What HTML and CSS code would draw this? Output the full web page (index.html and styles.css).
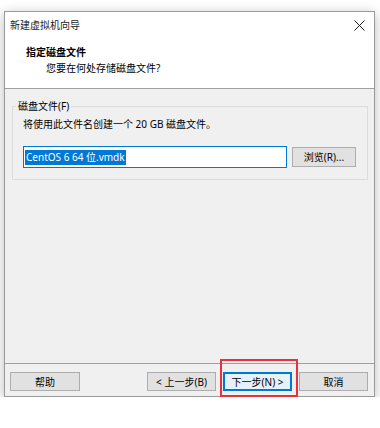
FILE: index.html
```html
<!DOCTYPE html>
<html lang="zh-CN">
<head>
    <meta charset="UTF-8">
    <meta name="viewport" content="width=device-width, initial-scale=1.0">
    <title>新建虚拟机向导</title>
    <link rel="stylesheet" href="styles.css">
</head>
<body>
    <div class="dialog">
        <div class="titlebar">
            <span class="title">新建虚拟机向导</span>
            <svg class="close" width="11" height="11" viewBox="0 0 11 11">
                <path d="M0.5 0.5 L10.5 10.5 M10.5 0.5 L0.5 10.5" stroke="#1a1a1a" stroke-width="1" fill="none"/>
            </svg>
        </div>

        <div class="header">
            <div class="heading">指定磁盘文件</div>
            <div class="subheading">您要在何处存储磁盘文件?</div>
        </div>

        <div class="content">
            <fieldset class="group">
                <legend>磁盘文件(F)</legend>
                <p class="note">将使用此文件名创建一个 20 GB 磁盘文件。</p>
                <div class="file-row">
                    <div class="textbox"><span class="selected">CentOS 6 64 位.vmdk</span></div>
                    <button class="btn btn-browse">浏览(R)...</button>
                </div>
            </fieldset>
        </div>

        <div class="footer">
            <button class="btn btn-help">帮助</button>
            <div class="nav">
                <button class="btn">&lt; 上一步(B)</button>
                <div class="next-wrap">
                    <button class="btn btn-default">下一步(N) &gt;</button>
                    <div class="highlight"></div>
                </div>
                <button class="btn">取消</button>
            </div>
        </div>
    </div>
</body>
</html>
```

FILE: styles.css
```css
* {
    box-sizing: border-box;
    margin: 0;
    padding: 0;
}

body {
    background: #ffffff;
    font-family: "Noto Sans", "Noto Sans CJK SC", sans-serif;
    font-size: 10px;
    line-height: 14px;
    color: #000000;
}

.dialog {
    margin: 11px 0 0 4px;
    width: 371px;
    height: 386px;
    border: 1px solid #9a9a9a;
    background: #f0f0f0;
    display: flex;
    flex-direction: column;
    box-shadow: 0 3px 12px rgba(0, 0, 0, 0.28);
}

.titlebar {
    height: 26px;
    background: #ffffff;
    display: flex;
    align-items: center;
    justify-content: space-between;
    padding: 0 9px 0 5px;
}

.title {
    color: #1a1a1a;
}

.close {
    display: block;
}

.header {
    height: 51px;
    background: #ffffff;
    border-bottom: 1px solid #a0a0a0;
    padding: 7px 0 0 21px;
}

.heading {
    font-weight: bold;
}

.subheading {
    margin-top: 2px;
    padding-left: 20px;
}

.content {
    flex: 1;
}

.group {
    margin: 10px 6px 0 7px;
    padding: 4px 11px 11px 10px;
    border: 1px solid #dcdcdc;
}

.group legend {
    margin-left: -7px;
    padding: 0 2px;
}

.note {
    margin-bottom: 15px;
}

.file-row {
    display: flex;
    align-items: center;
    gap: 5px;
}

.textbox {
    flex: 1;
    height: 22px;
    background: #ffffff;
    border: 1px solid #0078d7;
    padding: 2px 1px;
    display: flex;
    align-items: center;
}

.selected {
    background: #0078d7;
    color: #ffffff;
    line-height: 15px;
    padding: 0 1px;
}

.btn {
    font-family: inherit;
    font-size: 10px;
    line-height: 14px;
    color: #000000;
    height: 19px;
    width: 69px;
    background: #e1e1e1;
    border: 1px solid #adadad;
    cursor: default;
}

.btn-browse {
    width: 64px;
    height: 20px;
}

.btn-help {
    width: 70px;
}

.btn-default {
    border-color: #0078d7;
    box-shadow: inset 0 0 0 1px #0078d7;
    background: #e5f1fb;
}

.footer {
    height: 33px;
    border-top: 1px solid #a0a0a0;
    padding: 8px 6px 0 5px;
    display: flex;
    justify-content: space-between;
    align-items: flex-start;
}

.nav {
    display: flex;
    gap: 7px;
}

.next-wrap {
    position: relative;
}

.highlight {
    position: absolute;
    left: -3px;
    top: -13px;
    width: 78px;
    height: 38px;
    border: 2px solid #e8323a;
    pointer-events: none;
}
```
